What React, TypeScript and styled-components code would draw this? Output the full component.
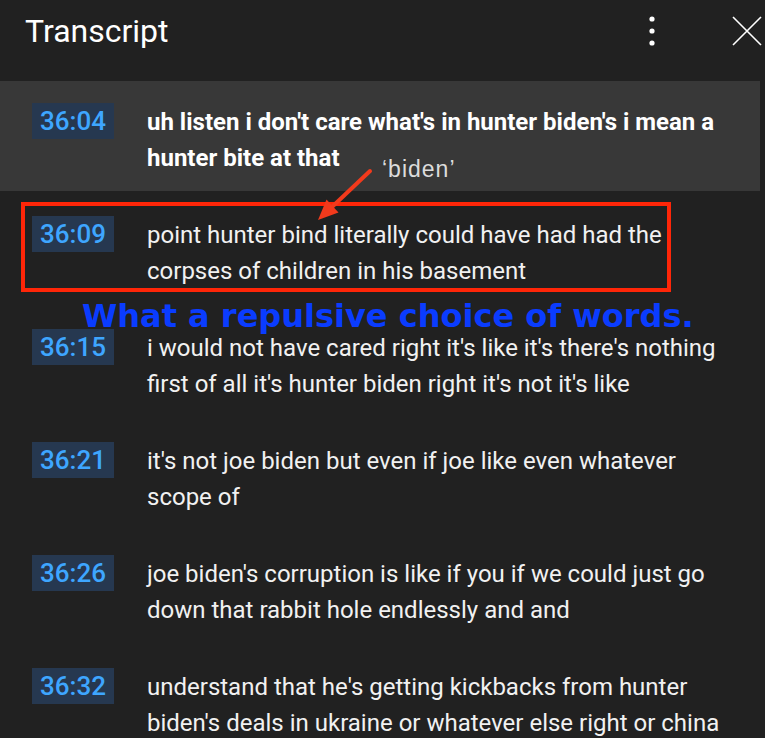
import React from "react";
import styled, { createGlobalStyle } from "styled-components";

const Global = createGlobalStyle`
  html, body { margin: 0; padding: 0; background: #212121; }
  body { font-family: Roboto, "Noto Sans", sans-serif; }
`;

const Panel = styled.div`
  position: relative;
  width: 765px;
  height: 738px;
  overflow: hidden;
  background: #212121;
`;

const Header = styled.header`
  height: 61px;
  display: flex;
  align-items: center;
  padding: 0 3px 0 25px;
`;

const Title = styled.h1`
  margin: 0;
  font-family: Roboto, sans-serif;
  font-weight: 400;
  font-size: 32px;
  line-height: 1;
  color: #ffffff;
  flex: 1;
`;

const IconButton = styled.button`
  background: none;
  border: 0;
  padding: 0;
  margin: 0;
  display: flex;
  align-items: center;
  justify-content: center;
  color: #ffffff;
`;

const Actions = styled.div`
  display: flex;
  align-items: center;
  gap: 68px;
`;

const List = styled.div`
  padding: 20px 5px 0 0;
  display: flex;
  flex-direction: column;
  gap: 3px;
`;

const Row = styled.div<{ $active?: boolean }>`
  box-sizing: border-box;
  min-height: 110px;
  display: flex;
  align-items: flex-start;
  padding: 22px 30px 0 32px;
  background: ${(p) => (p.$active ? "#383838" : "transparent")};
`;

const Stamp = styled.div`
  flex: none;
  width: 82px;
  height: 36px;
  background: #263850;
  color: #3ea6ff;
  font-family: Roboto, sans-serif;
  font-weight: 500;
  font-size: 26px;
  line-height: 36px;
  text-align: center;
`;

const Text = styled.div<{ $active?: boolean }>`
  flex: 1;
  margin-left: 33px;
  margin-top: 1px;
  font-family: Roboto, sans-serif;
  font-size: 24px;
  line-height: 36px;
  font-weight: ${(p) => (p.$active ? 700 : 400)};
  color: ${(p) => (p.$active ? "#ffffff" : "#f1f1f1")};
`;

const HighlightBox = styled.div`
  position: absolute;
  left: 21px;
  top: 202px;
  width: 650px;
  height: 90px;
  box-sizing: border-box;
  border: 4px solid #ff2608;
  pointer-events: none;
`;

const Label = styled.div`
  position: absolute;
  left: 382px;
  top: 158px;
  font-family: "Liberation Sans", Arial, sans-serif;
  font-size: 23px;
  line-height: 22px;
  letter-spacing: 1px;
  color: #dcdcdc;
  white-space: nowrap;
`;

const ArrowSvg = styled.svg`
  position: absolute;
  left: 310px;
  top: 162px;
  overflow: visible;
`;

const Caption = styled.div`
  position: absolute;
  left: 82px;
  top: 300px;
  font-family: "DejaVu Sans", Verdana, sans-serif;
  font-weight: 700;
  font-size: 32px;
  line-height: 32px;
  color: #0a3cff;
  white-space: nowrap;
`;

const rows = [
  { t: "36:04", text: "uh listen i don't care what's in hunter biden's i mean a hunter bite at that", active: true },
  { t: "36:09", text: "point hunter bind literally could have had had the corpses of children in his basement" },
  { t: "36:15", text: "i would not have cared right it's like it's there's nothing first of all it's hunter biden right it's not it's like" },
  { t: "36:21", text: "it's not joe biden but even if joe like even whatever scope of" },
  { t: "36:26", text: "joe biden's corruption is like if you if we could just go down that rabbit hole endlessly and and" },
  { t: "36:32", text: "understand that he's getting kickbacks from hunter biden's deals in ukraine or whatever else right or china" },
];

export default function App() {
  return (
    <Panel>
      <Global />
      <Header>
        <Title>Transcript</Title>
        <Actions>
          <IconButton aria-label="More">
            <svg width="24" height="36" viewBox="0 0 24 36">
              <circle cx="12" cy="6" r="2.6" fill="#fff" />
              <circle cx="12" cy="18" r="2.6" fill="#fff" />
              <circle cx="12" cy="30" r="2.6" fill="#fff" />
            </svg>
          </IconButton>
          <IconButton aria-label="Close">
            <svg width="30" height="30" viewBox="0 0 30 30">
              <path d="M1 1 L29 29 M29 1 L1 29" stroke="#fff" strokeWidth="1.6" fill="none" />
            </svg>
          </IconButton>
        </Actions>
      </Header>
      <List>
        {rows.map((r) => (
          <Row key={r.t} $active={r.active}>
            <Stamp>{r.t}</Stamp>
            <Text $active={r.active}>{r.text}</Text>
          </Row>
        ))}
      </List>
      <HighlightBox />
      <Label>‘biden’</Label>
      <ArrowSvg width="70" height="66" viewBox="0 0 70 66">
        <line x1="60" y1="9" x2="23" y2="44" stroke="#f23a1c" strokeWidth="4" strokeLinecap="round" />
        <polygon points="8,58 28.5,50.5 16.5,37.5" fill="#f23a1c" />
      </ArrowSvg>
      <Caption>What a repulsive choice of words.</Caption>
    </Panel>
  );
}
